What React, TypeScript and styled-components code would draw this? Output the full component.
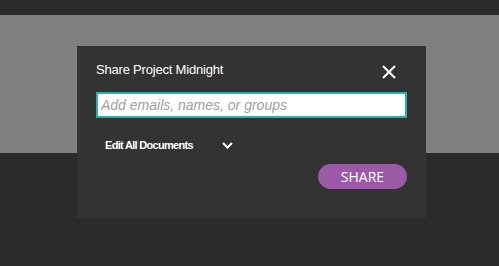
import React, { useState } from 'react';
import styled, { createGlobalStyle } from 'styled-components';

const GlobalStyle = createGlobalStyle`
  html, body {
    margin: 0;
    padding: 0;
    background: #2b2b2b;
    font-family: "Liberation Sans", Arial, sans-serif;
  }
`;

const Page = styled.div`
  width: 499px;
  height: 266px;
  position: relative;
  background: #2b2b2b;
  overflow: hidden;
`;

const TopBar = styled.div`
  height: 15px;
  background: #2b2b2b;
`;

const Backdrop = styled.div`
  height: 138px;
  background: #808080;
`;

const Modal = styled.div`
  position: absolute;
  left: 77px;
  top: 46px;
  width: 349px;
  height: 172px;
  box-sizing: border-box;
  background: #333333;
  padding: 15px 19px 0 19px;
  display: flex;
  flex-direction: column;
`;

const Header = styled.div`
  display: flex;
  align-items: center;
  justify-content: space-between;
  height: 17px;
`;

const Title = styled.h2`
  margin: 0;
  font-size: 13px;
  font-weight: normal;
  letter-spacing: -0.2px;
  color: #ffffff;
`;

const CloseButton = styled.button`
  background: none;
  border: none;
  padding: 0;
  margin-right: 11px;
  margin-top: 4px;
  width: 14px;
  height: 14px;
  cursor: pointer;
  display: flex;
`;

const Input = styled.input`
  margin-top: 14px;
  height: 26px;
  box-sizing: border-box;
  width: 311px;
  border: 2px solid #26b3ad;
  background: #ffffff;
  padding: 0 3px;
  font-family: "Liberation Sans", Arial, sans-serif;
  font-size: 14px;
  outline: none;
  &::placeholder {
    color: #a0a0a0;
    font-style: italic;
  }
`;

const Permission = styled.div`
  margin-top: 21px;
  margin-left: 9px;
  display: flex;
  align-items: center;
  gap: 29px;
  color: #ffffff;
  font-size: 11px;
  font-weight: bold;
  letter-spacing: -0.7px;
  cursor: pointer;
`;

const Footer = styled.div`
  display: flex;
  justify-content: flex-end;
  margin-top: 13px;
  width: 311px;
`;

const ShareButton = styled.button`
  width: 89px;
  height: 25px;
  border: none;
  border-radius: 13px;
  background: #9b5aa5;
  color: #ffffff;
  font-family: "Open Sans", "Liberation Sans", sans-serif;
  font-size: 14px;
  padding: 0;
  cursor: pointer;
`;

const App: React.FC = () => {
  const [value, setValue] = useState('');

  return (
    <Page>
      <GlobalStyle />
      <TopBar />
      <Backdrop />
      <Modal>
        <Header>
          <Title>Share Project Midnight</Title>
          <CloseButton aria-label="Close">
            <svg width="14" height="14" viewBox="0 0 14 14">
              <path d="M1 1 L13 13 M13 1 L1 13" stroke="#fff" strokeWidth="2" />
            </svg>
          </CloseButton>
        </Header>
        <Input
          type="text"
          placeholder="Add emails, names, or groups"
          value={value}
          onChange={(e) => setValue(e.target.value)}
          autoFocus
        />
        <Permission>
          <span>Edit All Documents</span>
          <svg width="11" height="7" viewBox="0 0 11 7">
            <path d="M1 1 L5.5 5.5 L10 1" stroke="#fff" strokeWidth="2" fill="none" />
          </svg>
        </Permission>
        <Footer>
          <ShareButton>SHARE</ShareButton>
        </Footer>
      </Modal>
    </Page>
  );
};

export default App;
